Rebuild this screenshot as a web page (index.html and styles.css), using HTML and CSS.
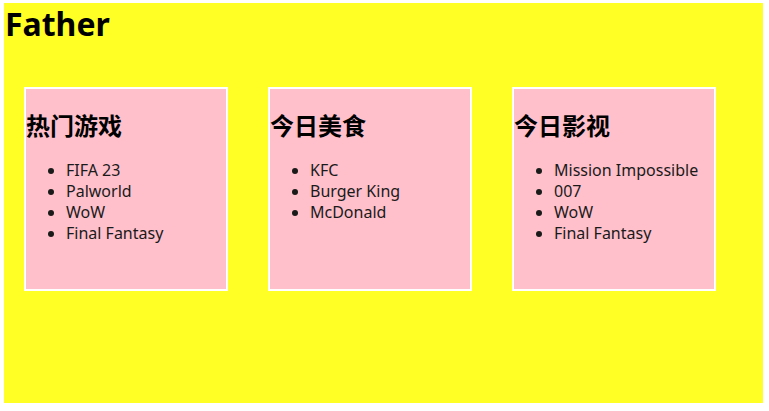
FILE: index.html
```html
<!DOCTYPE html>
<html lang="zh-CN">
<head>
<meta charset="utf-8">
<title>Father</title>
<link rel="stylesheet" href="styles.css">
</head>
<body>
<div class="father">
  <h1 class="title">Father</h1>
  <div class="cards">
    <div class="card">
      <h2 class="card-title">热门游戏</h2>
      <ul class="list">
        <li>FIFA 23</li>
        <li>Palworld</li>
        <li>WoW</li>
        <li>Final Fantasy</li>
      </ul>
    </div>
    <div class="card">
      <h2 class="card-title">今日美食</h2>
      <ul class="list">
        <li>KFC</li>
        <li>Burger King</li>
        <li>McDonald</li>
      </ul>
    </div>
    <div class="card">
      <h2 class="card-title">今日影视</h2>
      <ul class="list">
        <li>Mission Impossible</li>
        <li>007</li>
        <li>WoW</li>
        <li>Final Fantasy</li>
      </ul>
    </div>
  </div>
</div>
</body>
</html>
```
FILE: styles.css
```css
html, body {
  background: #ffffff;
}
body {
  margin: 3px 0 0 4px;
  font-family: "Noto Sans", "Noto Sans CJK SC", sans-serif;
  line-height: 1.32;
  color: #000;
}
.father {
  width: 759px;
  height: 400px;
  background: #ffff26;
  overflow: hidden;
}
.title {
  margin: 0 0 21.44px 0;
  font-size: 32px;
  font-weight: bold;
  line-height: 42.24px;
  padding-left: 1px;
}
.cards {
  display: flex;
  align-items: flex-start;
  gap: 40px;
  padding: 20px;
}
.card {
  width: 200px;
  height: 200px;
  border: 2px solid #ffffff;
  background: #ffc0cb;
  flex: none;
}
.card-title {
  margin: 19.92px 0;
  font-size: 24px;
  font-weight: bold;
  line-height: 31.68px;
  font-family: "Noto Sans CJK SC", sans-serif;
}
.list {
  margin: 16px 0;
  padding-left: 40px;
  font-size: 16px;
  line-height: 21px;
  color: #1a1a1a;
}
```
